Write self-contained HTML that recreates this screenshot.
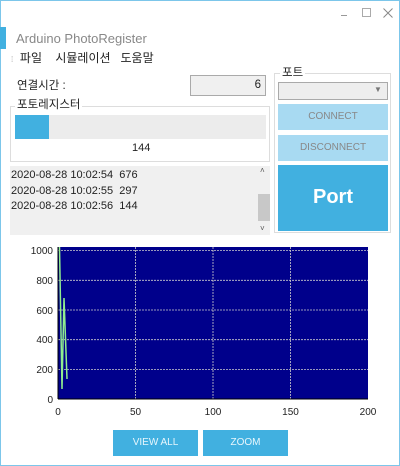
<!DOCTYPE html>
<html><head><meta charset="utf-8"><style>
*{margin:0;padding:0;box-sizing:border-box}
body{width:400px;height:466px;background:#fff;position:relative;overflow:hidden;font-family:"Liberation Sans","Noto Sans CJK KR",sans-serif;font-size:11px;color:#222}
.a{position:absolute}
.btn{position:absolute;background:#41b0e0;color:#e8f6fc;text-align:center;font-size:10px}
</style></head><body>
<div class="a" style="left:0;top:0;width:400px;height:466px;border:1px solid #7cc6ea"></div>
<div class="a" style="left:341px;top:15px;width:6px;height:1px;background:#999"></div>
<div class="a" style="left:362px;top:8px;width:9px;height:9px;border:1px solid #aaa"></div>
<svg class="a" style="left:383px;top:8px" width="10" height="10"><path d="M0.5 0.5L9.5 9.5M9.5 0.5L0.5 9.5" stroke="#888" stroke-width="1"/></svg>
<div class="a" style="left:0;top:27px;width:6px;height:22px;background:#41b0e0"></div>
<div class="a" style="left:16px;top:31px;font-size:13px;color:#888">Arduino PhotoRegister</div>
<div class="a" style="left:11px;top:49px;font-size:12px;color:#222"><span style="color:#aaa;font-size:8px">⁞</span>&nbsp; 파일 &nbsp;&nbsp; 시뮬레이션 &nbsp;&nbsp;도움말</div>
<div class="a" style="left:17px;top:77px;font-size:11.5px">연결시간 :</div>
<div class="a" style="left:190px;top:75px;width:76px;height:21px;background:#f0f0f0;border:1px solid #aaa;text-align:right;padding:3px 4px;font-size:11.5px">6</div>
<div class="a" style="left:10px;top:106px;width:260px;height:56px;border:1px solid #ddd"></div>
<div class="a" style="left:15px;top:96px;background:#fff;padding:0 2px;font-size:11.5px">포토레지스터</div>
<div class="a" style="left:15px;top:115px;width:251px;height:24px;background:#ececec"></div>
<div class="a" style="left:15px;top:115px;width:34px;height:24px;background:#41b0e0"></div>
<div class="a" style="left:132px;top:142px;font-size:11px">144</div>
<div class="a" style="left:10px;top:166px;width:260px;height:69px;background:#f0f0f0"></div>
<div class="a" style="left:11px;top:168px;line-height:15.5px;font-size:11px">2020-08-28 10:02:54&nbsp;&nbsp;676<br>2020-08-28 10:02:55&nbsp;&nbsp;297<br>2020-08-28 10:02:56&nbsp;&nbsp;144</div>
<div class="a" style="left:258px;top:194px;width:12px;height:27px;background:#c8c8c8"></div>
<div class="a" style="left:260px;top:166px;font-size:8px;color:#555">˄</div>
<div class="a" style="left:260px;top:224px;font-size:8px;color:#555">˅</div>
<div class="a" style="left:274px;top:73px;width:117px;height:160px;border:1px solid #ddd"></div>
<div class="a" style="left:280px;top:64px;background:#fff;padding:0 2px;font-size:11.5px">포트</div>
<div class="a" style="left:278px;top:82px;width:110px;height:18px;background:#eee;border:1px solid #aaa"></div>
<div class="a" style="left:374px;top:85px;font-size:8px;color:#777">▼</div>
<div class="btn" style="left:278px;top:104px;width:110px;height:26px;background:#a8daf2;color:#888;line-height:26px">CONNECT</div>
<div class="btn" style="left:278px;top:135px;width:110px;height:26px;background:#a8daf2;color:#888;line-height:26px">DISCONNECT</div>
<div class="btn" style="left:278px;top:165px;width:110px;height:66px;color:#fff;font-size:20px;font-weight:bold;line-height:64px">Port</div>
<svg class="a" style="left:0;top:235px" width="400" height="190" font-family="Liberation Sans" font-size="10" fill="#222">
<rect x="58" y="12" width="310" height="152" fill="#00008b"/>
<g stroke="#ccc" stroke-dasharray="2,1" stroke-width="0.8">
<line x1="135.5" y1="12" x2="135.5" y2="164"/><line x1="213" y1="12" x2="213" y2="164"/><line x1="290.5" y1="12" x2="290.5" y2="164"/>
<line x1="58" y1="15.5" x2="368" y2="15.5"/><line x1="58" y1="45.3" x2="368" y2="45.3"/><line x1="58" y1="75" x2="368" y2="75"/><line x1="58" y1="104.7" x2="368" y2="104.7"/><line x1="58" y1="134.4" x2="368" y2="134.4"/>
</g>
<line x1="58" y1="164" x2="368" y2="164" stroke="#000"/><line x1="58" y1="12" x2="58" y2="164" stroke="#000"/>
<polyline points="59.5,12 62,154 64,63 67,144" fill="none" stroke="#90ee90" stroke-width="1.5"/>
<g text-anchor="end"><text x="53" y="19">1000</text><text x="53" y="49">800</text><text x="53" y="79">600</text><text x="53" y="108">400</text><text x="53" y="138">200</text><text x="53" y="168">0</text></g>
<g text-anchor="middle"><text x="58" y="180">0</text><text x="135.5" y="180">50</text><text x="213" y="180">100</text><text x="290.5" y="180">150</text><text x="368" y="180">200</text></g>
</svg>
<div class="btn" style="left:113px;top:430px;width:85px;height:26px;line-height:26px">VIEW ALL</div>
<div class="btn" style="left:203px;top:430px;width:85px;height:26px;line-height:26px">ZOOM</div>
</body></html>
